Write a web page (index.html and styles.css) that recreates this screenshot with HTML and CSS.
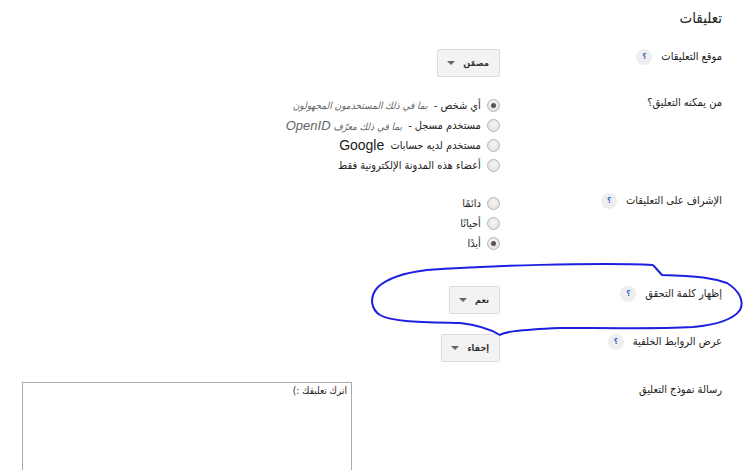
FILE: index.html
```html
<!DOCTYPE html>
<html lang="ar" dir="rtl">
<head>
    <meta charset="UTF-8">
    <meta name="viewport" content="width=device-width, initial-scale=1.0">
    <title>تعليقات</title>
    <link rel="stylesheet" href="styles.css">
</head>
<body>
    <div class="page">
        <h2 class="title">تعليقات</h2>

        <div class="row tight">
            <div class="label">موقع التعليقات <span class="help">؟</span></div>
            <div class="control">
                <button class="dropdown">مضمّن <span class="arrow"></span></button>
            </div>
        </div>

        <div class="row tight">
            <div class="label">من يمكنه التعليق؟</div>
            <div class="control">
                <label class="radio"><input type="radio" name="who" checked> أي شخص - <i class="note">بما في ذلك المستخدمون المجهولون</i></label>
                <label class="radio"><input type="radio" name="who"> مستخدم مسجل - <i class="note">بما في ذلك معرّف <span class="latin">OpenID</span></i></label>
                <label class="radio"><input type="radio" name="who"> مستخدم لديه حسابات <span class="brand">Google</span></label>
                <label class="radio"><input type="radio" name="who"> أعضاء هذه المدونة الإلكترونية فقط</label>
            </div>
        </div>

        <div class="row loose">
            <div class="label">الإشراف على التعليقات <span class="help">؟</span></div>
            <div class="control">
                <label class="radio"><input type="radio" name="mod"> دائمًا</label>
                <label class="radio"><input type="radio" name="mod"> أحيانًا</label>
                <label class="radio"><input type="radio" name="mod" checked> أبدًا</label>
            </div>
        </div>

        <div class="row">
            <div class="label">إظهار كلمة التحقق <span class="help">؟</span></div>
            <div class="control">
                <button class="dropdown">نعم <span class="arrow"></span></button>
            </div>
        </div>

        <div class="row">
            <div class="label">عرض الروابط الخلفية <span class="help">؟</span></div>
            <div class="control">
                <button class="dropdown">إخفاء <span class="arrow"></span></button>
            </div>
        </div>

        <div class="row">
            <div class="label">رسالة نموذج التعليق</div>
            <div class="control">
                <textarea class="message">اترك تعليقك :)</textarea>
            </div>
        </div>

        <!-- hand-drawn highlight around the captcha setting -->
        <svg class="scribble" width="744" height="470" viewBox="0 0 744 470">
            <path d="M653 265 C 600 262, 480 266, 427 270 C 410 272, 390 276, 378 287 C 368 298, 372 310, 380 315 C 392 322, 420 322, 460 323 C 478 325, 490 329, 500 335 C 505 332, 515 330, 560 328 C 600 328, 660 329, 693 327 C 715 325, 733 320, 740 310 C 745 300, 738 290, 727 283 C 712 278, 700 276, 662 275 L 653 265"/>
        </svg>
    </div>
</body>
</html>
```

FILE: styles.css
```css
body {
    margin: 0;
    font-family: "DejaVu Sans Condensed", "DejaVu Sans", sans-serif;
    font-size: 11px;
    color: #222;
    background: #fff;
}
.page {
    position: relative;
    width: 744px;
    height: 470px;
    overflow: hidden;
    box-sizing: border-box;
    padding: 8px 22px 0 22px;
}
.title {
    font-size: 15px;
    font-weight: normal;
    line-height: 20px;
    margin: 0 0 21px;
}
.row {
    display: flex;
    margin-bottom: 20px;
}
.row.tight {
    margin-bottom: 18px;
}
.row.loose {
    margin-bottom: 33px;
}
.label {
    flex: none;
    width: 222px;
    line-height: 16px;
    display: flex;
    align-items: center;
    gap: 9px;
    align-self: flex-start;
}
.help {
    display: inline-flex;
    align-items: center;
    justify-content: center;
    width: 16px;
    height: 16px;
    border-radius: 50%;
    background: #eeeeee;
    color: #3366cc;
    font-size: 8px;
    font-weight: bold;
}
.control {
    flex: 1;
    display: flex;
    flex-direction: column;
    align-items: flex-start;
}
.dropdown {
    display: flex;
    align-items: center;
    gap: 8px;
    height: 28px;
    padding: 0 10px 0 9px;
    font-family: inherit;
    font-size: 9px;
    font-weight: bold;
    color: #333;
    background: #f3f3f3;
    border: 1px solid #dcdcdc;
    border-radius: 2px;
    cursor: pointer;
}
.arrow {
    width: 0;
    height: 0;
    border-left: 4px solid transparent;
    border-right: 4px solid transparent;
    border-top: 4px solid #666;
}
.radio {
    display: flex;
    align-items: center;
    gap: 3px;
    height: 20px;
    white-space: pre;
}
.radio input {
    appearance: none;
    margin: 0;
    width: 13px;
    height: 13px;
    border-radius: 50%;
    border: 1px solid #b5b5b5;
    background: radial-gradient(circle at 50% 40%, #f6f6f6, #dcdcdc);
    display: inline-flex;
    align-items: center;
    justify-content: center;
}
.radio input:checked::after {
    content: "";
    width: 5px;
    height: 5px;
    border-radius: 50%;
    background: #555;
}
.note {
    color: #666;
    font-size: 10px;
}
.latin {
    font-family: "Liberation Sans", sans-serif;
    font-size: 13px;
}
.brand {
    font-family: "Liberation Sans", sans-serif;
    font-size: 14px;
}
.message {
    margin: 0;
    margin-right: 148px;
    width: 330px;
    height: 100px;
    box-sizing: border-box;
    border: 1px solid #aaa;
    padding: 2px 4px;
    font-family: inherit;
    font-size: 10px;
    color: #222;
    resize: none;
}
.scribble {
    position: absolute;
    top: 0;
    left: 0;
    pointer-events: none;
}
.scribble path {
    fill: none;
    stroke: #1f1fe0;
    stroke-width: 2;
    stroke-linejoin: round;
}
```
